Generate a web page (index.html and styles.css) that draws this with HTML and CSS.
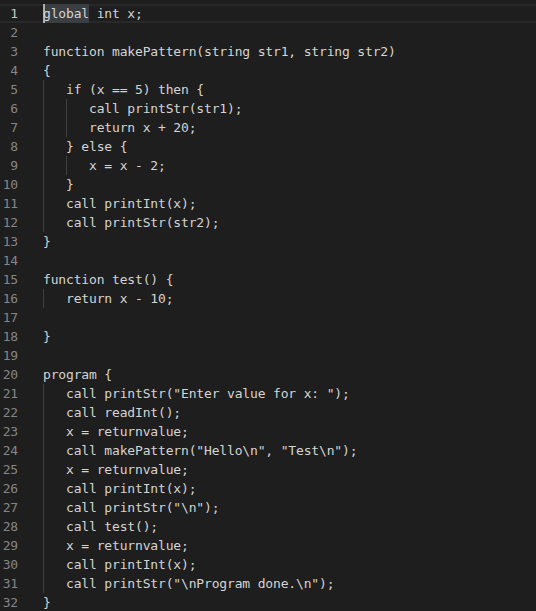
FILE: index.html
```html
<!DOCTYPE html>
<html>
<head>
<meta charset="utf-8">
<link rel="stylesheet" href="styles.css">
</head>
<body>
<div class="editor">
  <div class="line current"><span class="ln">1</span><span class="code"><span class="sel">global</span> int x;</span></div>
  <div class="line"><span class="ln">2</span><span class="code"></span></div>
  <div class="line"><span class="ln">3</span><span class="code">function makePattern(string str1, string str2)</span></div>
  <div class="line"><span class="ln">4</span><span class="code">{</span></div>
  <div class="line"><span class="ln">5</span><span class="code"><span class="ind"></span>if (x == 5) then {</span></div>
  <div class="line"><span class="ln">6</span><span class="code"><span class="ind"></span><span class="ind"></span>call printStr(str1);</span></div>
  <div class="line"><span class="ln">7</span><span class="code"><span class="ind"></span><span class="ind"></span>return x + 20;</span></div>
  <div class="line"><span class="ln">8</span><span class="code"><span class="ind"></span>} else {</span></div>
  <div class="line"><span class="ln">9</span><span class="code"><span class="ind"></span><span class="ind"></span>x = x - 2;</span></div>
  <div class="line"><span class="ln">10</span><span class="code"><span class="ind"></span>}</span></div>
  <div class="line"><span class="ln">11</span><span class="code"><span class="ind"></span>call printInt(x);</span></div>
  <div class="line"><span class="ln">12</span><span class="code"><span class="ind"></span>call printStr(str2);</span></div>
  <div class="line"><span class="ln">13</span><span class="code">}</span></div>
  <div class="line"><span class="ln">14</span><span class="code"></span></div>
  <div class="line"><span class="ln">15</span><span class="code">function test() {</span></div>
  <div class="line"><span class="ln">16</span><span class="code"><span class="ind"></span>return x - 10;</span></div>
  <div class="line"><span class="ln">17</span><span class="code"></span></div>
  <div class="line"><span class="ln">18</span><span class="code">}</span></div>
  <div class="line"><span class="ln">19</span><span class="code"></span></div>
  <div class="line"><span class="ln">20</span><span class="code">program {</span></div>
  <div class="line"><span class="ln">21</span><span class="code"><span class="ind"></span>call printStr("Enter value for x: ");</span></div>
  <div class="line"><span class="ln">22</span><span class="code"><span class="ind"></span>call readInt();</span></div>
  <div class="line"><span class="ln">23</span><span class="code"><span class="ind"></span>x = returnvalue;</span></div>
  <div class="line"><span class="ln">24</span><span class="code"><span class="ind"></span>call makePattern("Hello\n", "Test\n");</span></div>
  <div class="line"><span class="ln">25</span><span class="code"><span class="ind"></span>x = returnvalue;</span></div>
  <div class="line"><span class="ln">26</span><span class="code"><span class="ind"></span>call printInt(x);</span></div>
  <div class="line"><span class="ln">27</span><span class="code"><span class="ind"></span>call printStr("\n");</span></div>
  <div class="line"><span class="ln">28</span><span class="code"><span class="ind"></span>call test();</span></div>
  <div class="line"><span class="ln">29</span><span class="code"><span class="ind"></span>x = returnvalue;</span></div>
  <div class="line"><span class="ln">30</span><span class="code"><span class="ind"></span>call printInt(x);</span></div>
  <div class="line"><span class="ln">31</span><span class="code"><span class="ind"></span>call printStr("\nProgram done.\n");</span></div>
  <div class="line"><span class="ln">32</span><span class="code">}</span></div>
</div>
</body>
</html>
```
FILE: styles.css
```css
html, body {
  margin: 0;
  padding: 0;
  background: #1e1e1e;
  height: 100%;
  overflow: hidden;
}
.editor {
  padding-top: 4px;
  font-family: "DejaVu Sans Mono", "Liberation Mono", monospace;
  font-size: 13px;
  letter-spacing: -0.16px;
  color: #d4d4d4;
}
.line {
  display: flex;
  height: 19px;
  line-height: 19px;
  white-space: pre;
}
.line.current {
  box-shadow: inset 0 2px 0 #282828, inset 0 -2px 0 #282828;
}
.ln {
  width: 18px;
  flex: none;
  text-align: right;
  color: #858585;
}
.current .ln {
  color: #c6c6c6;
}
.code {
  margin-left: 25px;
  display: flex;
  height: 100%;
}
.ind {
  display: inline-block;
  width: 23px;
  height: 100%;
  box-shadow: inset 1px 0 0 #404040;
  flex: none;
}
.sel {
  background: #3a3d41;
  box-shadow: inset 2px 0 0 #aeafad;
}
```
